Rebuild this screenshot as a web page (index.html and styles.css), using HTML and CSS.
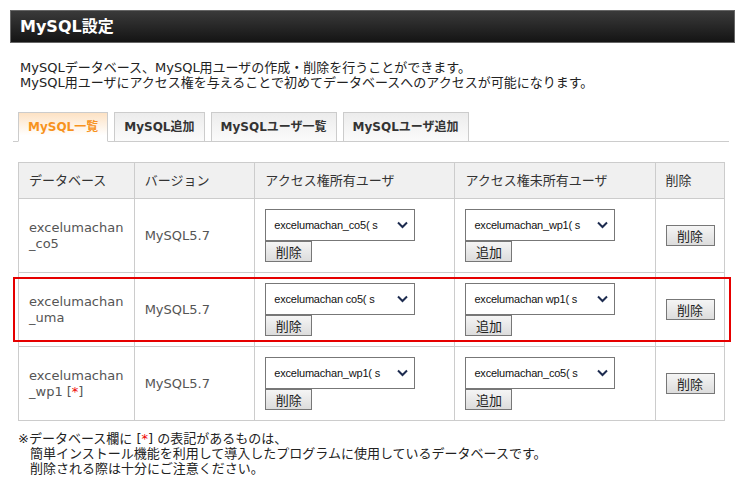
FILE: index.html
```html
<!DOCTYPE html>
<html lang="ja">
<head>
<meta charset="utf-8">
<title>MySQL設定</title>
<link rel="stylesheet" href="styles.css">
</head>
<body>
<div class="header"><h1 class="title">MySQL設定</h1></div>
<p class="desc">MySQLデータベース、MySQL用ユーザの作成・削除を行うことができます。<br>MySQL用ユーザにアクセス権を与えることで初めてデータベースへのアクセスが可能になります。</p>
<div class="tabs">
  <span class="tab active">MySQL一覧</span>
  <span class="tab">MySQL追加</span>
  <span class="tab">MySQLユーザ一覧</span>
  <span class="tab">MySQLユーザ追加</span>
</div>
<div class="table-wrap">
<table class="db">
  <thead>
    <tr>
      <th class="c1">データベース</th>
      <th class="c2">バージョン</th>
      <th class="c3">アクセス権所有ユーザ</th>
      <th class="c4">アクセス権未所有ユーザ</th>
      <th class="c5">削除</th>
    </tr>
  </thead>
  <tbody>
    <tr>
      <td>excelumachan<br>_co5</td>
      <td>MySQL5.7</td>
      <td><span class="sel"><select><option>excelumachan_co5( s</option></select><svg class="chev" width="11" height="8" viewBox="0 0 11 8"><polyline points="1,1.5 5.5,6 10,1.5" fill="none" stroke="#1d2b4f" stroke-width="2"/></svg></span><br><button class="btn">削除</button></td>
      <td><span class="sel"><select><option>excelumachan_wp1( s</option></select><svg class="chev" width="11" height="8" viewBox="0 0 11 8"><polyline points="1,1.5 5.5,6 10,1.5" fill="none" stroke="#1d2b4f" stroke-width="2"/></svg></span><br><button class="btn">追加</button></td>
      <td><button class="btn btn-del">削除</button></td>
    </tr>
    <tr>
      <td>excelumachan<br>_uma</td>
      <td>MySQL5.7</td>
      <td><span class="sel"><select><option>excelumachan co5( s</option></select><svg class="chev" width="11" height="8" viewBox="0 0 11 8"><polyline points="1,1.5 5.5,6 10,1.5" fill="none" stroke="#1d2b4f" stroke-width="2"/></svg></span><br><button class="btn">削除</button></td>
      <td><span class="sel"><select><option>excelumachan wp1( s</option></select><svg class="chev" width="11" height="8" viewBox="0 0 11 8"><polyline points="1,1.5 5.5,6 10,1.5" fill="none" stroke="#1d2b4f" stroke-width="2"/></svg></span><br><button class="btn">追加</button></td>
      <td><button class="btn btn-del">削除</button></td>
    </tr>
    <tr>
      <td>excelumachan<br>_wp1 [<span class="mark">*</span>]</td>
      <td>MySQL5.7</td>
      <td><span class="sel"><select><option>excelumachan_wp1( s</option></select><svg class="chev" width="11" height="8" viewBox="0 0 11 8"><polyline points="1,1.5 5.5,6 10,1.5" fill="none" stroke="#1d2b4f" stroke-width="2"/></svg></span><br><button class="btn">削除</button></td>
      <td><span class="sel"><select><option>excelumachan_co5( s</option></select><svg class="chev" width="11" height="8" viewBox="0 0 11 8"><polyline points="1,1.5 5.5,6 10,1.5" fill="none" stroke="#1d2b4f" stroke-width="2"/></svg></span><br><button class="btn">追加</button></td>
      <td><button class="btn btn-del">削除</button></td>
    </tr>
  </tbody>
</table>
<div class="highlight"></div>
</div>
<div class="note">
  <p class="note-first">※データベース欄に [<span class="mark">*</span>] の表記があるものは、</p>
  <p class="note-sub">簡単インストール機能を利用して導入したプログラムに使用しているデータベースです。</p>
  <p class="note-sub">削除される際は十分にご注意ください。</p>
</div>
</body>
</html>
```

FILE: styles.css
```css
html, body {
  margin: 0;
  padding: 0;
  background: #fff;
}
body {
  font-family: "DejaVu Sans", "Noto Sans CJK JP", sans-serif;
  font-size: 13px;
  color: #222;
}
.header {
  box-sizing: border-box;
  margin: 10px 11px 0 10px;
  height: 33px;
  border: 1px solid #666;
  background: linear-gradient(#3a3a3a, #141414);
}
.title {
  margin: 0;
  padding-left: 9px;
  font-size: 16px;
  font-weight: bold;
  line-height: 31px;
  color: #fff;
}
.desc {
  margin: 17px 0 0 0;
  padding-left: 20px;
  line-height: 15px;
  color: #222;
}
.tabs {
  display: flex;
  gap: 6px;
  margin: 22px 17px 0 13px;
  padding-left: 5px;
  border-bottom: 1px solid #ccc;
  height: 29px;
}
.tab {
  box-sizing: border-box;
  height: 30px;
  margin-bottom: -1px;
  padding: 0 9px;
  border: 1px solid #ccc;
  background: linear-gradient(#ececec, #fbfbfb);
  font-weight: bold;
  font-size: 12px;
  line-height: 28px;
  color: #333;
  white-space: nowrap;
}
.tab.active {
  border-bottom-color: #fff;
  background: linear-gradient(#fde2c4, #fff 80%);
  color: #f7931e;
}
.table-wrap {
  position: relative;
  margin: 20px 0 0 18px;
  width: 707px;
}
.db {
  width: 707px;
  border-collapse: collapse;
  table-layout: fixed;
}
.db th, .db td {
  border: 1px solid #ccc;
  padding: 0 0 0 10px;
  text-align: left;
  vertical-align: middle;
  line-height: 16px;
  overflow: hidden;
}
.db th {
  height: 35px;
  background: #f0f0f0;
  font-weight: normal;
  color: #333;
}
.db td {
  height: 73px;
  color: #555;
}
.c1 { width: 104px; }
.c2 { width: 109px; }
.c3 { width: 188px; }
.c4 { width: 188px; }
.c5 { width: 58px; }
.sel {
  position: relative;
  display: inline-block;
  vertical-align: top;
}
.sel select {
  box-sizing: border-box;
  appearance: none;
  -webkit-appearance: none;
  width: 150px;
  height: 32px;
  margin: 0;
  padding: 0 0 0 8px;
  border: 1px solid #777;
  border-radius: 0;
  background: #fff;
  font-family: "Liberation Sans", sans-serif;
  font-size: 11px;
  letter-spacing: -0.2px;
  color: #111;
}
.chev {
  position: absolute;
  right: 7px;
  top: 12px;
  pointer-events: none;
}
.btn {
  box-sizing: border-box;
  height: 21px;
  width: 47px;
  margin: 0;
  padding: 0;
  border: 1px solid #777;
  border-radius: 0;
  background: linear-gradient(#f5f5f5, #dcdcdc);
  font-family: "Noto Sans CJK JP", sans-serif;
  font-size: 13px;
  line-height: 19px;
  color: #222;
  vertical-align: top;
}
.btn-del {
  width: 49px;
}
.mark {
  color: #e00;
}
.highlight {
  position: absolute;
  left: -5px;
  top: 115px;
  width: 718px;
  height: 65px;
  box-sizing: border-box;
  border: 2px solid #e60000;
  pointer-events: none;
}
.note {
  margin: 10px 0 0 18px;
  color: #222;
  line-height: 15px;
}
.note p {
  margin: 0;
}
.note-sub {
  padding-left: 12px;
}
```
